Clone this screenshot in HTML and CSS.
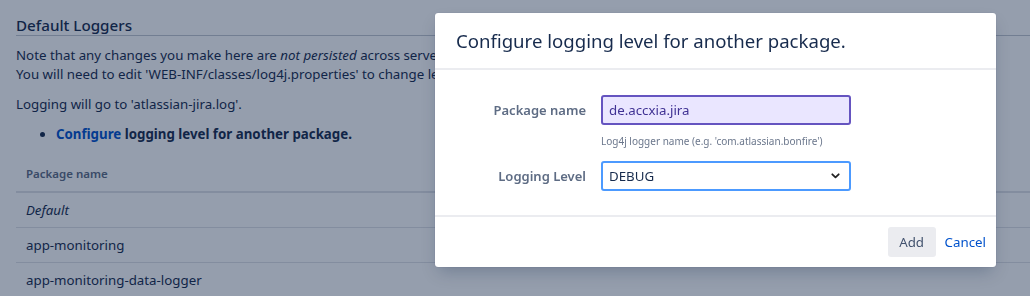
FILE: index.html
```html
<!DOCTYPE html>
<html>
<head>
<meta charset="utf-8">
<link rel="stylesheet" href="styles.css">
</head>
<body>
<main class="page">
  <h2 class="title">Default Loggers</h2>
  <p class="note">Note that any changes you make here are <em>not persisted</em> across server restarts.<br>You will need to edit 'WEB-INF/classes/log4j.properties' to change levels permanently.</p>
  <p class="note">Logging will go to 'atlassian-jira.log'.</p>
  <ul class="actions">
    <li><a class="link" href="#">Configure</a> logging level for another package.</li>
  </ul>
  <table class="loggers">
    <thead><tr><th>Package name</th></tr></thead>
    <tbody>
      <tr><td><em>Default</em></td></tr>
      <tr><td>app-monitoring</td></tr>
      <tr><td>app-monitoring-data-logger</td></tr>
    </tbody>
  </table>
</main>
<div class="blanket"></div>
<section class="dialog">
  <header class="dialog-header">Configure logging level for another package.</header>
  <div class="dialog-body">
    <div class="field">
      <label class="field-label">Package name</label>
      <div class="field-control">
        <div class="input">de.accxia.jira</div>
        <div class="help">Log4j logger name (e.g. 'com.atlassian.bonfire')</div>
      </div>
    </div>
    <div class="field">
      <label class="field-label">Logging Level</label>
      <div class="field-control">
        <div class="select"><span>DEBUG</span>
          <svg width="9" height="6" viewBox="0 0 9 6"><path d="M1.3 1.3 L4.5 4.4 L7.7 1.3" fill="none" stroke="#222" stroke-width="1.8" stroke-linecap="round" stroke-linejoin="round"/></svg>
        </div>
      </div>
    </div>
  </div>
  <footer class="dialog-footer">
    <button class="btn">Add</button>
    <a class="cancel" href="#">Cancel</a>
  </footer>
</section>
</body>
</html>
```
FILE: styles.css
```css
html, body {
  margin: 0;
  padding: 0;
  background: #fff;
  font-family: "Noto Sans", "Open Sans", sans-serif;
  color: #172b4d;
  width: 1030px;
  height: 296px;
  overflow: hidden;
}
.page {
  padding: 16px 0 0 16px;
  width: 1014px;
  overflow: hidden;
}
.title {
  margin: 0;
  font-size: 15.2px;
  font-weight: 500;
  line-height: 19px;
  border-bottom: 1px solid #c1c7d0;
  width: 1200px;
}
.note {
  margin: 10px 0 0 0;
  font-size: 13.3px;
  line-height: 19px;
  white-space: nowrap;
}
.note + .note { margin-top: 11px; }
.actions {
  margin: 10px 0 0 0;
  padding-left: 40px;
  font-size: 13.3px;
  line-height: 20px;
  font-weight: 700;
}
.link { color: #0052cc; text-decoration: none; }
.loggers {
  margin-top: 13px;
  border-collapse: collapse;
  width: 1200px;
  font-size: 13.3px;
}
.loggers th {
  text-align: left;
  font-size: 11.5px;
  font-weight: 600;
  color: #5e6c84;
  padding: 8px 10px 8px;
  border-bottom: 2px solid #dfe1e6;
  line-height: 18px;
}
.loggers td {
  padding: 8px 10px 7px;
  line-height: 19px;
  border-bottom: 1px solid #dfe1e6;
}
.blanket {
  position: fixed;
  inset: 0;
  background: rgba(9, 30, 66, 0.43);
}
.dialog {
  position: absolute;
  left: 435px;
  top: 13px;
  width: 561px;
  background: #fff;
  border-radius: 3px;
  box-shadow: 0 0 1px rgba(9,30,66,0.31), 0 8px 16px -4px rgba(9,30,66,0.25);
}
.dialog-header {
  height: 57px;
  box-sizing: border-box;
  padding: 0 21px 1px;
  display: flex;
  align-items: center;
  font-size: 18.6px;
  color: #172b4d;
  border-bottom: 2px solid #ebecf0;
}
.dialog-body {
  padding: 25px 0 24px;
  display: flex;
  flex-direction: column;
  gap: 13px;
  border-bottom: 2px solid #ebecf0;
}
.field {
  display: flex;
  gap: 15px;
}
.field-label {
  width: 151px;
  text-align: right;
  font-size: 13px;
  font-weight: 600;
  color: #5e6c84;
  line-height: 30px;
}
.field-control {
  display: flex;
  flex-direction: column;
}
.input, .select {
  width: 250px;
  height: 30px;
  box-sizing: border-box;
  border-radius: 3px;
  font-size: 13.3px;
  padding: 0 6px;
  display: flex;
  align-items: center;
}
.input {
  background: #eae6ff;
  border: 2px solid #6554c0;
  color: #403294;
}
.select {
  background: #fff;
  border: 2px solid #4c9aff;
  color: #172b4d;
  justify-content: space-between;
  padding-right: 9px;
}
.help {
  font-size: 10px;
  color: #6b778c;
  margin-top: 9px;
  line-height: 14px;
}
.dialog-footer {
  height: 50px;
  display: flex;
  align-items: center;
  justify-content: flex-end;
  gap: 9px;
  padding-right: 10px;
}
.btn {
  font-family: inherit;
  font-size: 13.3px;
  background: #ebecf0;
  color: #42526e;
  border: 0;
  border-radius: 3px;
  height: 30px;
  width: 48px;
  padding: 0;
}
.cancel {
  color: #0052cc;
  text-decoration: none;
  font-size: 13.3px;
}
```
